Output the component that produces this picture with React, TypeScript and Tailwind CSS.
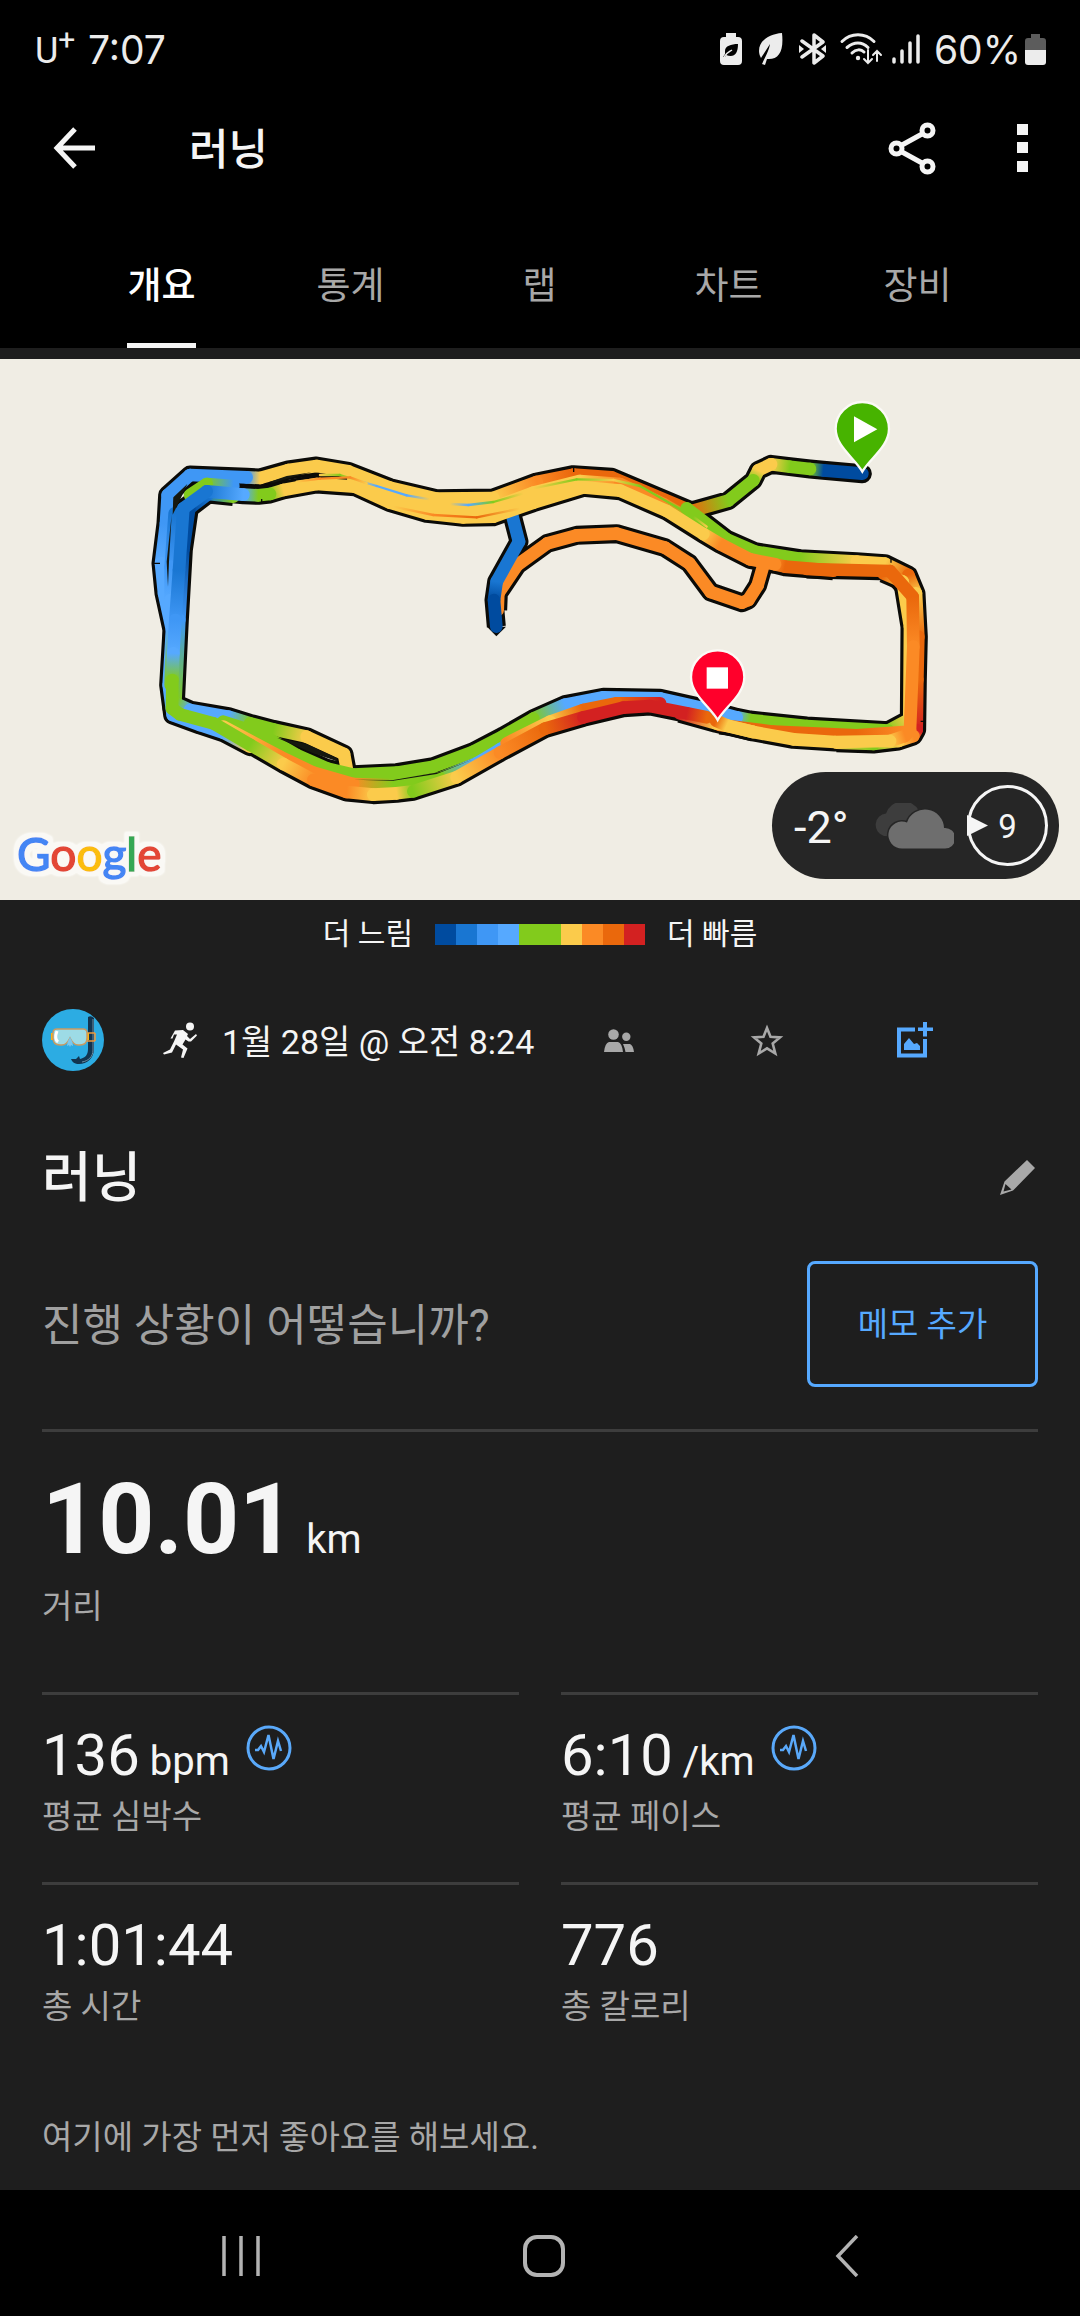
import React, { useState } from "react";

type RoutePoint = [number, number, string];

const NAVY = "#004b9f";
const BLUE = "#1976d2";
const AZURE = "#3f97f5";
const SKY = "#56a9ff";
const GREEN = "#82cb1c";
const YELLOW = "#fbcb4b";
const ORANGE = "#fb8a25";
const RUST = "#ea680c";
const RED = "#d32121";

const legendColors = [
  NAVY,
  BLUE,
  AZURE,
  SKY,
  GREEN,
  GREEN,
  YELLOW,
  ORANGE,
  RUST,
  RED,
];

// Route pieces, drawn in order: later ones lie over earlier ones
const routes: RoutePoint[][] = [
  // warm up leg and first lap along the top
  [
    [2167, 281, NAVY],
    [2050, 271, NAVY],
    [2010, 267, GREEN],
    [1950, 260, GREEN],
    [1893, 253, YELLOW],
    [1855, 271, YELLOW],
    [1840, 301, GREEN],
    [1765, 362, GREEN],
    [1655, 393, RUST],
    [1415, 292, RUST],
    [1300, 284, RUST],
    [1190, 306, ORANGE],
    [1060, 354, YELLOW],
    [890, 356, YELLOW],
    [750, 323, YELLOW],
    [625, 274, YELLOW],
    [530, 258, YELLOW],
    [445, 270, YELLOW],
    [360, 294, YELLOW],
    [320, 292, AZURE],
    [150, 285, AZURE],
    [83, 345, AZURE],
    [78, 430, AZURE],
    [63, 550, SKY],
    [72, 640, SKY],
    [96, 750, SKY],
    [86, 915, SKY],
    [98, 1005, SKY],
    [180, 1035, SKY],
    [250, 1058, SKY],
    [330, 1100, YELLOW],
  ],
  // inner left edge
  [
    [280, 350, GREEN],
    [205, 342, BLUE],
    [148, 385, NAVY],
    [130, 510, NAVY],
    [118, 720, AZURE],
    [106, 970, GREEN],
    [150, 990, SKY],
    [265, 1010, SKY],
    [330, 1030, GREEN],
    [400, 1048, GREEN],
    [500, 1070, YELLOW],
    [612, 1122, YELLOW],
    [620, 1165, YELLOW],
  ],
  // inner shortcut
  [
    [1073, 690, ORANGE],
    [1075, 640, ORANGE],
    [1132, 555, ORANGE],
    [1222, 490, ORANGE],
    [1310, 466, ORANGE],
    [1430, 461, ORANGE],
    [1575, 503, ORANGE],
    [1648, 550, ORANGE],
    [1712, 636, ORANGE],
    [1806, 668, ORANGE],
    [1825, 660, ORANGE],
    [1853, 616, ORANGE],
    [1872, 550, ORANGE],
  ],
  [
    [1115, 400, BLUE],
    [1137, 485, BLUE],
    [1070, 605, BLUE],
    [1062, 660, NAVY],
    [1069, 740, NAVY],
  ],
  // middle of the band along the top
  [
    [640, 297, YELLOW],
    [750, 345, YELLOW],
    [870, 378, YELLOW],
    [1060, 382, YELLOW],
    [1180, 338, YELLOW],
    [1320, 303, YELLOW],
    [1440, 312, ORANGE],
    [1570, 372, ORANGE],
    [1660, 425, GREEN],
  ],
  // middle of the band down the left
  [
    [104, 400, BLUE],
    [92, 560, AZURE],
    [92, 660, SKY],
    [97, 750, SKY],
    [92, 915, GREEN],
  ],
  // right side, outer
  [
    [1640, 385, GREEN],
    [1760, 478, GREEN],
    [1845, 515, GREEN],
    [1980, 536, GREEN],
    [2150, 545, YELLOW],
    [2235, 551, YELLOW],
    [2305, 585, RUST],
    [2328, 640, YELLOW],
    [2335, 770, RUST],
    [2332, 900, RUST],
    [2330, 1050, RED],
    [2320, 1068, ORANGE],
    [2275, 1083, YELLOW],
    [2200, 1092, GREEN],
    [2090, 1088, YELLOW],
  ],
  // right side, inner, and the green lap back along the bottom
  [
    [2230, 580, RUST],
    [2288, 605, YELLOW],
    [2310, 740, YELLOW],
    [2308, 1018, YELLOW],
    [2245, 1052, GREEN],
    [2000, 1038, GREEN],
    [1830, 1020, GREEN],
    [1790, 1012, SKY],
    [1680, 982, SKY],
    [1560, 955, SKY],
    [1390, 952, SKY],
    [1275, 974, SKY],
    [1180, 1016, GREEN],
    [1090, 1068, GREEN],
    [1000, 1115, GREEN],
    [880, 1160, GREEN],
    [770, 1178, GREEN],
    [640, 1184, GREEN],
    [560, 1165, GREEN],
    [470, 1125, GREEN],
    [360, 1060, GREEN],
    [250, 1025, GREEN],
  ],
  // thin traces that show between the laps
  [
    [1180, 1052, SKY],
    [1080, 1108, SKY],
    [1010, 1150, SKY],
    [900, 1195, GREEN],
    [760, 1215, GREEN],
    [640, 1212, ORANGE],
    [520, 1178, ORANGE],
    [420, 1130, ORANGE],
    [250, 1040, YELLOW],
  ],
  [
    [1560, 970, RED],
    [1430, 970, RUST],
    [1330, 990, RUST],
    [1230, 1025, YELLOW],
    [1100, 1090, ORANGE],
  ],
  [
    [1740, 1035, RUST],
    [1900, 1055, RUST],
    [2150, 1066, RUST],
    [2290, 1056, ORANGE],
  ],
  [
    [1840, 1056, YELLOW],
    [1728, 1030, YELLOW],
    [1620, 1000, RED],
  ],
  [
    [280, 318, AZURE],
    [200, 312, GREEN],
    [150, 345, GREEN],
  ],
  // main lap, top to left to bottom
  [
    [2080, 572, RUST],
    [1935, 560, RUST],
    [1905, 553, ORANGE],
    [1830, 538, ORANGE],
    [1740, 492, ORANGE],
    [1690, 462, YELLOW],
    [1580, 393, YELLOW],
    [1440, 332, YELLOW],
    [1330, 322, YELLOW],
    [1180, 368, YELLOW],
    [1060, 410, YELLOW],
    [970, 412, YELLOW],
    [860, 400, YELLOW],
    [750, 368, YELLOW],
    [645, 320, YELLOW],
    [530, 312, YELLOW],
    [430, 330, YELLOW],
    [390, 342, GREEN],
    [355, 346, GREEN],
    [310, 344, SKY],
    [200, 334, BLUE],
    [130, 385, BLUE],
    [117, 570, BLUE],
    [106, 720, AZURE],
    [100, 820, SKY],
    [97, 900, GREEN],
    [96, 985, GREEN],
    [120, 1003, GREEN],
    [220, 1030, GREEN],
    [330, 1094, GREEN],
    [430, 1152, YELLOW],
    [520, 1200, ORANGE],
    [620, 1236, ORANGE],
    [700, 1244, YELLOW],
    [770, 1240, YELLOW],
    [820, 1234, GREEN],
    [950, 1192, YELLOW],
    [1080, 1118, ORANGE],
    [1215, 1046, RUST],
    [1330, 1012, RED],
    [1450, 983, RED],
    [1530, 978, RED],
    [1640, 1000, RED],
    [1700, 1012, RUST],
  ],
  // last straight to the finish
  [
    [2000, 567, RUST],
    [2250, 573, RUST],
    [2318, 650, RUST],
    [2320, 800, ORANGE],
    [2310, 1050, ORANGE],
    [2295, 1068, ORANGE],
    [2250, 1083, YELLOW],
    [2085, 1086, YELLOW],
    [1960, 1078, YELLOW],
    [1840, 1056, YELLOW],
    [1760, 1036, YELLOW],
    [1728, 1022, RUST],
  ],
];

// Narrow accents on top of the laps
const accents: RoutePoint[][] = [
  [
    [540, 285, YELLOW],
    [600, 285, GREEN],
    [650, 300, YELLOW],
    [710, 318, SKY],
    [800, 346, SKY],
    [870, 358, YELLOW],
  ],
  [
    [930, 372, YELLOW],
    [985, 375, SKY],
    [1060, 366, GREEN],
    [1150, 340, YELLOW],
  ],
  [
    [760, 380, YELLOW],
    [880, 405, ORANGE],
    [1010, 412, RUST],
    [1140, 386, YELLOW],
  ],
  [
    [470, 305, YELLOW],
    [540, 296, ORANGE],
    [630, 292, ORANGE],
    [680, 310, YELLOW],
  ],
  [
    [1180, 325, YELLOW],
    [1310, 298, GREEN],
    [1420, 300, YELLOW],
    [1500, 318, GREEN],
    [1660, 410, GREEN],
    [1700, 440, YELLOW],
  ],
];

const slivers = [
  "M412 1074 L500 1092 L590 1134 L592 1144 L520 1120Z",
  "M388 306 L440 288 L515 277 L470 288 L400 308Z",
  "M100 352 L142 312 L116 368 L98 404Z",
  "M95 404 L80 545 L84 620 L87 545Z",
  "M640 1199 L760 1200 L900 1176 L1000 1138 L890 1182 L760 1202Z",
];

const points = (route: RoutePoint[]) =>
  route.map(([x, y]) => `${x},${y}`).join(" ");

const GradientLine = ({
  route,
  id,
  width,
}: {
  route: RoutePoint[];
  id: string;
  width: number;
}) => (
  <>
    {route.slice(1).map(([x, y, color], index) => {
      const [fromX, fromY, fromColor] = route[index];
      const key = `${id}-${index}`;
      return (
        <g key={key}>
          <linearGradient
            id={key}
            gradientUnits="userSpaceOnUse"
            x1={fromX}
            y1={fromY}
            x2={x}
            y2={y}
          >
            <stop offset="0" stopColor={fromColor} />
            <stop offset="1" stopColor={color} />
          </linearGradient>
          <path
            d={`M${fromX} ${fromY}L${x} ${y}`}
            stroke={`url(#${key})`}
            strokeWidth={width}
            strokeLinecap="round"
          />
        </g>
      );
    })}
  </>
);

const RouteMap = () => (
  <svg
    viewBox="0 0 1080 541"
    className="block w-full"
    fill="none"
    role="img"
    aria-label="지도"
  >
    <rect width="1080" height="541" fill="#f0ede4" />
    <g transform="translate(140 21) scale(0.33333)">
      {routes.map((route, index) => (
        <polyline
          key={index}
          points={points(route)}
          stroke="#0b0b08"
          strokeWidth="57"
          strokeLinejoin="round"
          strokeLinecap={index === 0 ? "round" : "butt"}
        />
      ))}
      <path d="M1041 740 L1069 769 L1098 740Z" fill="#0b0b08" />
      {routes.map((route, index) => (
        <GradientLine key={index} route={route} id={`lap${index}`} width={38} />
      ))}
      {accents.map((route, index) => (
        <GradientLine
          key={index}
          route={route}
          id={`accent${index}`}
          width={7}
        />
      ))}
      {slivers.map((d) => (
        <path key={d} d={d} fill="#16180f" />
      ))}
      <path
        d="M365 357v14M40 550h20M1301 262v14M2253 534v14M2342 1024h14"
        stroke="#0b0b08"
        strokeWidth="4"
      />
      <path
        d="M2167 275C2145 235 2087 200 2087 146A80 80 0 0 1 2247 146C2247 200 2190 235 2167 275Z"
        fill="#47b300"
        stroke="#fbfaf6"
        strokeWidth="7"
      />
      <path d="M2142 109L2212 148L2142 187Z" fill="#fff" />
      <path
        d="M1733 1020C1711 980 1653 945 1653 891A80 80 0 0 1 1813 891C1813 945 1756 980 1733 1020Z"
        fill="#ff002b"
        stroke="#fbfaf6"
        strokeWidth="7"
      />
      <path d="M1700 862h64v64h-64z" fill="#fff" />
    </g>
  </svg>
);

const GoogleMark = () => (
  <svg
    viewBox="0 0 170 70"
    className="absolute bottom-0 left-2 w-[170px] overflow-visible"
  >
    <filter id="halo" x="-10%" y="-20%" width="120%" height="140%">
      <feMorphology operator="dilate" radius="4" />
      <feGaussianBlur stdDeviation="1" />
      <feComponentTransfer result="grown">
        <feFuncA type="linear" slope="2" />
      </feComponentTransfer>
      <feFlood floodColor="#faf9f5" />
      <feComposite in2="grown" operator="in" />
      <feMerge>
        <feMergeNode />
        <feMergeNode in="SourceGraphic" />
      </feMerge>
    </filter>
    <text
      x="9"
      y="41"
      fontSize="46"
      filter="url(#halo)"
      strokeWidth="1.500"
      className="font-[Lato,sans-serif]"
    >
      <tspan fill="#4486f4" stroke="#4486f4">
        G
      </tspan>
      <tspan fill="#e34636" stroke="#e34636">
        o
      </tspan>
      <tspan fill="#fbbd0a" stroke="#fbbd0a">
        o
      </tspan>
      <tspan fill="#4486f4" stroke="#4486f4">
        g
      </tspan>
      <tspan fill="#36a854" stroke="#36a854">
        l
      </tspan>
      <tspan fill="#e34636" stroke="#e34636">
        e
      </tspan>
    </text>
  </svg>
);

const WeatherBadge = () => (
  <div className="absolute bottom-[21px] right-[21px] flex h-[107px] w-[287px] items-center rounded-full bg-[#262626] pl-[22px] pr-[11px]">
    <span className="pt-1 text-[45px] leading-none">-2°</span>
    <svg
      viewBox="0 0 82 46"
      className="ml-auto w-[82px]"
      fill="none"
      aria-hidden="true"
    >
      <path
        d="M12 33A11.500 11.500 0 0 1 14 10.500A18 18 0 0 1 47 8L30 34Z"
        fill="#3d3d3d"
      />
      <path
        d="M30 45.500A13.500 13.500 0 1 1 35 19.500A19 19 0 0 1 72 25A10.300 10.300 0 1 1 72 45.500Z"
        fill="#6e6e6e"
        stroke="#262626"
        strokeWidth="3"
        paintOrder="stroke"
      />
    </svg>
    <div className="relative ml-[13px] flex size-[81px] items-center justify-center rounded-full border-3 border-[#f5f5f5] pt-[2px] text-[33px] leading-none">
      <svg
        viewBox="0 0 21 21"
        className="absolute -left-[3px] top-[27px] w-[21px]"
        aria-hidden="true"
      >
        <path d="M0 0L21 10.500L0 21Z" fill="#f5f5f5" />
      </svg>
      9
    </div>
  </div>
);

const StatusBar = () => (
  <div className="flex h-[98px] items-center justify-between pl-[35px] pr-[34px] font-[Inter,sans-serif] text-[39px] leading-none text-[#ececec]">
    <div className="flex items-center">
      <span className="flex w-[53px] pt-1 font-[Roboto,sans-serif] text-[36px]">
        U<span className="-mt-2 text-[30px]">+</span>
      </span>
      <span>7:07</span>
    </div>
    <div className="flex items-center">
      <svg viewBox="0 0 166 32" className="h-8 w-[166px]" aria-hidden="true">
        <g fill="#ececec">
          <path d="M6 0h10v4h2a4 4 0 0 1 4 4v20a4 4 0 0 1-4 4H4a4 4 0 0 1-4-4V8a4 4 0 0 1 4-4h2z" />
          <path
            d="M18 11c-7 0-13 2-13 7v3l-2 3h2l1-2c8 3 12-1 12-11z"
            fill="#000"
          />
          <path
            d="M4 24c2-4 5-5 8-7"
            stroke="#ececec"
            strokeWidth="1.500"
            fill="none"
          />
          <path d="M62 0C50 1 39 7 39 18c0 3 1 5 2 7l9-14c-1 7-5 13-8 20l3 1 2-6c12 1 17-8 15-26z" />
          <path d="M79 12l5 4-5 4zM106 12l-5 4 5 4z" />
        </g>
        <g stroke="#ececec" fill="none" strokeLinecap="round" strokeWidth="3">
          <path
            d="M82 8l21 15-9 7V2l9 7-21 15"
            strokeLinejoin="round"
            strokeWidth="3.500"
          />
          <path d="M122 8.500c9-9 23-9 32 0M127 14.500c7-6 15-6 21 0M132 20c4-4 9-4 12-1" />
          <path
            d="M148 17v13m-4-4l4 4 4-4M157 28V18m-4 4l4-4 4 4"
            strokeWidth="2"
          />
        </g>
        <circle cx="138" cy="25" r="2.200" fill="#ececec" />
      </svg>
      <svg
        viewBox="0 0 28 30"
        className="ml-[6px] w-7"
        aria-hidden="true"
        stroke="#ececec"
        strokeWidth="3.500"
        strokeLinecap="round"
      >
        <path d="M2 25v3M10 17v11M18 9v19M26 2v26" />
      </svg>
      <span className="ml-[14px]">60%</span>
      <svg viewBox="0 0 21 31" className="ml-1 w-[21px]" aria-hidden="true">
        <path
          d="M6 0h9v4h3a3 3 0 0 1 3 3v9H0V7a3 3 0 0 1 3-3h3z"
          fill="#5c5c5c"
        />
        <path d="M0 16h21v12a3 3 0 0 1-3 3H3a3 3 0 0 1-3-3z" fill="#ececec" />
      </svg>
    </div>
  </div>
);

const AppBar = () => (
  <div className="mb-[26px] flex h-[100px] items-center pl-[53px] pr-[52px]">
    <button type="button" aria-label="뒤로">
      <svg
        viewBox="0 0 42 42"
        className="w-[42px]"
        fill="none"
        stroke="#f5f5f5"
        strokeWidth="5"
      >
        <path d="M22 2L4 21L22 40M4 21H42" />
      </svg>
    </button>
    <h1 className="ml-[94px] pt-1 text-[43px] font-medium leading-none">
      러닝
    </h1>
    <button type="button" aria-label="공유" className="ml-auto">
      <svg
        viewBox="0 0 48 53"
        className="w-12"
        fill="none"
        stroke="#f5f5f5"
        strokeWidth="5"
      >
        <circle cx="8.500" cy="26.500" r="5.500" />
        <circle cx="39.500" cy="8.500" r="5.500" />
        <circle cx="39.500" cy="44.500" r="5.500" />
        <path d="M14 23L34 12M14 30L34 41" />
      </svg>
    </button>
    <button type="button" aria-label="더보기" className="ml-[81px]">
      <svg viewBox="0 0 11 48" className="w-[11px]" fill="#f5f5f5">
        <path d="M0 0h11v11H0zM0 18h11v11H0zM0 37h11v11H0z" />
      </svg>
    </button>
  </div>
);

const PulseIcon = () => (
  <svg
    viewBox="0 0 46 46"
    className="w-[46px]"
    fill="none"
    stroke="#5aa9fa"
    aria-hidden="true"
  >
    <circle cx="23" cy="23" r="21" strokeWidth="3" />
    <path
      d="M9 25h3l3-4 3 6 4.500-17 5 24 4.500-18 3 10"
      strokeWidth="2.500"
    />
  </svg>
);

const Stat = ({
  value,
  unit,
  label,
}: {
  value: string;
  unit?: string;
  label: string;
}) => (
  <div className="border-t-3 border-[#3d3d3d] pb-[45px] pt-[30px]">
    <div className="flex h-[60px] items-start gap-4">
      <p className="text-[58px] leading-[60px]">
        {value}
        {unit && (
          <span className="ml-[10px] text-[40px] leading-none">{unit}</span>
        )}
      </p>
      {unit && <PulseIcon />}
    </div>
    <p className="mt-3 text-[33px] leading-10 text-[#a8a8a8]">{label}</p>
  </div>
);

const tabs = ["개요", "통계", "랩", "차트", "장비"];

const App = () => {
  const [activeTab, setActiveTab] = useState("개요");

  return (
    <div className="flex min-h-screen flex-col bg-[#1e1e1e] font-[Roboto,'Noto_Sans_CJK_KR',sans-serif] text-[#f5f5f5]">
      <header className="bg-black">
        <StatusBar />
        <AppBar />
        <nav className="grid grid-cols-5 pl-[67px] pr-[68px]">
          {tabs.map((tab) => (
            <button
              key={tab}
              type="button"
              onClick={() => setActiveTab(tab)}
              className={`mx-auto flex h-[124px] items-center border-b-5 pt-[6px] text-[37px] leading-none ${
                activeTab === tab
                  ? "border-[#f5f5f5] font-medium text-white"
                  : "border-transparent text-[#a8a8a8]"
              }`}
            >
              {tab}
            </button>
          ))}
        </nav>
      </header>

      <main className="grow">
        <section className="relative mt-[11px]">
          <RouteMap />
          <GoogleMark />
          <WeatherBadge />
        </section>

        <div className="flex h-[68px] items-center justify-center gap-[22px] text-[30px] leading-none">
          <span>더 느림</span>
          <div className="flex h-[21px]">
            {legendColors.map((color, index) => (
              <div
                key={index}
                className="w-[21px]"
                style={{ backgroundColor: color }}
              />
            ))}
          </div>
          <span>더 빠름</span>
        </div>

        <div className="px-[42px]">
          <div className="mt-[41px] flex h-[62px] items-center">
            <svg
              viewBox="0 0 62 62"
              className="w-[62px] shrink-0"
              role="img"
              aria-label="프로필"
            >
              <circle cx="31" cy="31" r="31" fill="#2cace3" />
              <path
                d="M46 8q3-2 6 1v31c0 9-7 15-15 15-4 0-7-2-8-5h5l3-3 1 3c5-1 8-4 8-10z"
                fill="#12344f"
              />
              <path
                d="M51 10v31c0 7-5 11-11 12"
                fill="none"
                stroke="#6c8ca0"
                strokeWidth="1"
              />
              <path
                d="M44 24h9M44 32h9M53 24v8"
                fill="none"
                stroke="#f09a3c"
                strokeWidth="1.500"
              />
              <path d="M9 24h4v7H9zM44 24h3v7h-3z" fill="#fbb215" />
              <path
                d="M15 20h26q4 0 4 4v5q0 7-7 7h-2c-4 0-6-3-8-7-2 4-4 7-8 7h-2q-7 0-7-7v-5q0-4 4-4z"
                fill="#9ddbe6"
                stroke="#c99a62"
                strokeWidth="1.500"
              />
              <path
                d="M15 22q-3 8 1 11"
                stroke="#fff"
                strokeWidth="3"
                fill="none"
              />
              <path
                d="M28 28q-3 5-3 9l2-1 1 2 1-2 2 1q0-4-3-9z"
                fill="#7ac8ef"
              />
            </svg>
            <svg
              viewBox="0 0 34 36"
              className="ml-[59px] w-[34px] shrink-0"
              fill="#f5f5f5"
              aria-hidden="true"
            >
              <circle cx="27" cy="4.500" r="4" />
              <path d="M12 8.500L20 8l5 4-1 2 3 3 6-5 1 1.500-6 6h-2.500l-3-2-3 5 5 4-4 9.500-2.500-.5 2-8-7-5-4 8-8 2-1-1.500 7-3.500 4-8 3-7h-3l-1.500 4H7.500z" />
            </svg>
            <span className="ml-[25px] whitespace-nowrap pt-[3px] text-[34px] leading-none">
              1월 28일 @ 오전 8:24
            </span>
            <div className="ml-auto mr-[49px] flex">
              <button
                type="button"
                aria-label="공개 범위"
                className="flex w-[148px] items-center justify-center"
              >
                <svg viewBox="0 0 30 23" className="w-[30px]" fill="#a8a8a8">
                  <circle cx="9.500" cy="5.500" r="5.300" />
                  <circle cx="22.300" cy="7.800" r="4.200" />
                  <path d="M0 23q1-9 5-10h9q4 1 5 10zM19 15h7q3 1 4 8h-8.500q-1-5-2.500-8z" />
                </svg>
              </button>
              <button
                type="button"
                aria-label="즐겨찾기"
                className="flex w-[148px] items-center justify-center"
              >
                <svg
                  viewBox="0 0 34 33"
                  className="w-[34px]"
                  fill="none"
                  stroke="#a8a8a8"
                  strokeWidth="2.600"
                >
                  <path d="M17 4L20.500 12.800L30 13.400L22.700 19.500L25.300 29.500L17 24.300L8.700 29.500L11.300 19.500L4 13.400L13.500 12.800Z" />
                </svg>
              </button>
              <button
                type="button"
                aria-label="사진 추가"
                className="flex w-[148px] items-center justify-center"
              >
                <svg viewBox="0 0 36 36" className="w-9" fill="#56a9ff">
                  <path d="M0 5.500h18v4H4v22h22V17h4v18.500H0z" />
                  <path d="M7 28v-6l5-6 5 6 3-1 3 3v4zM21 5.500h5V0h4v5.500h6V9h-6v5.500h-4V9h-5z" />
                </svg>
              </button>
            </div>
          </div>

          <div className="mt-[76px] flex h-[60px] items-center justify-between">
            <h2 className="pt-1 text-[54px] font-medium leading-none">러닝</h2>
            <button type="button" aria-label="이름 편집" className="mr-[3px]">
              <svg viewBox="0 0 35 35" className="w-[35px]" fill="#a8a8a8">
                <path d="M27 0l8 8L13 30.500L0 35L4.500 21.500zM5.500 24L3.500 31.500L11.500 29.500z" />
              </svg>
            </button>
          </div>

          <div className="mt-[54px] flex items-center justify-between">
            <p className="pt-1 text-[44px] leading-none text-[#a0a0a0]">
              진행 상황이 어떻습니까?
            </p>
            <button
              type="button"
              className="h-[126px] w-[231px] rounded-lg border-3 border-[#56a9ff] pt-[2px] text-[33px] text-[#56a9ff]"
            >
              메모 추가
            </button>
          </div>

          <div className="mt-[42px] border-t-3 border-[#3d3d3d] pb-[65px] pt-[38px]">
            <p className="text-[98px] font-bold leading-[100px]">
              10.01
              <span className="ml-[11px] text-[40px] font-normal leading-none">
                km
              </span>
            </p>
            <p className="mt-[17px] text-[33px] leading-10 text-[#a8a8a8]">
              거리
            </p>
          </div>

          <div className="grid grid-cols-2 gap-x-[42px]">
            <Stat value="136" unit="bpm" label="평균 심박수" />
            <Stat value="6:10" unit="/km" label="평균 페이스" />
            <Stat value="1:01:44" label="총 시간" />
            <Stat value="776" label="총 칼로리" />
          </div>

          <p className="mb-8 mt-[46px] text-[33px] leading-10 text-[#a8a8a8]">
            여기에 가장 먼저 좋아요를 해보세요.
          </p>
        </div>
      </main>

      <footer className="flex h-[126px] items-center justify-between bg-black pl-[211px] pr-[203px] pt-[6px]">
        <button
          type="button"
          aria-label="최근 앱"
          className="flex w-[60px] justify-center"
        >
          <svg
            viewBox="0 0 40 42"
            className="w-10"
            stroke="#b3b3b3"
            strokeWidth="3.500"
          >
            <path d="M3 1v40M20 1v40M37 1v40" />
          </svg>
        </button>
        <button
          type="button"
          aria-label="홈"
          className="flex w-[60px] justify-center"
        >
          <svg
            viewBox="0 0 42 42"
            className="w-[42px]"
            fill="none"
            stroke="#b3b3b3"
            strokeWidth="4"
          >
            <rect x="2" y="2" width="38" height="38" rx="12" />
          </svg>
        </button>
        <button
          type="button"
          aria-label="이전"
          className="flex w-[60px] justify-center"
        >
          <svg
            viewBox="0 0 24 42"
            className="w-6"
            fill="none"
            stroke="#b3b3b3"
            strokeWidth="3.500"
          >
            <path d="M22 1L3 21L22 41" />
          </svg>
        </button>
      </footer>
    </div>
  );
};

export default App;
